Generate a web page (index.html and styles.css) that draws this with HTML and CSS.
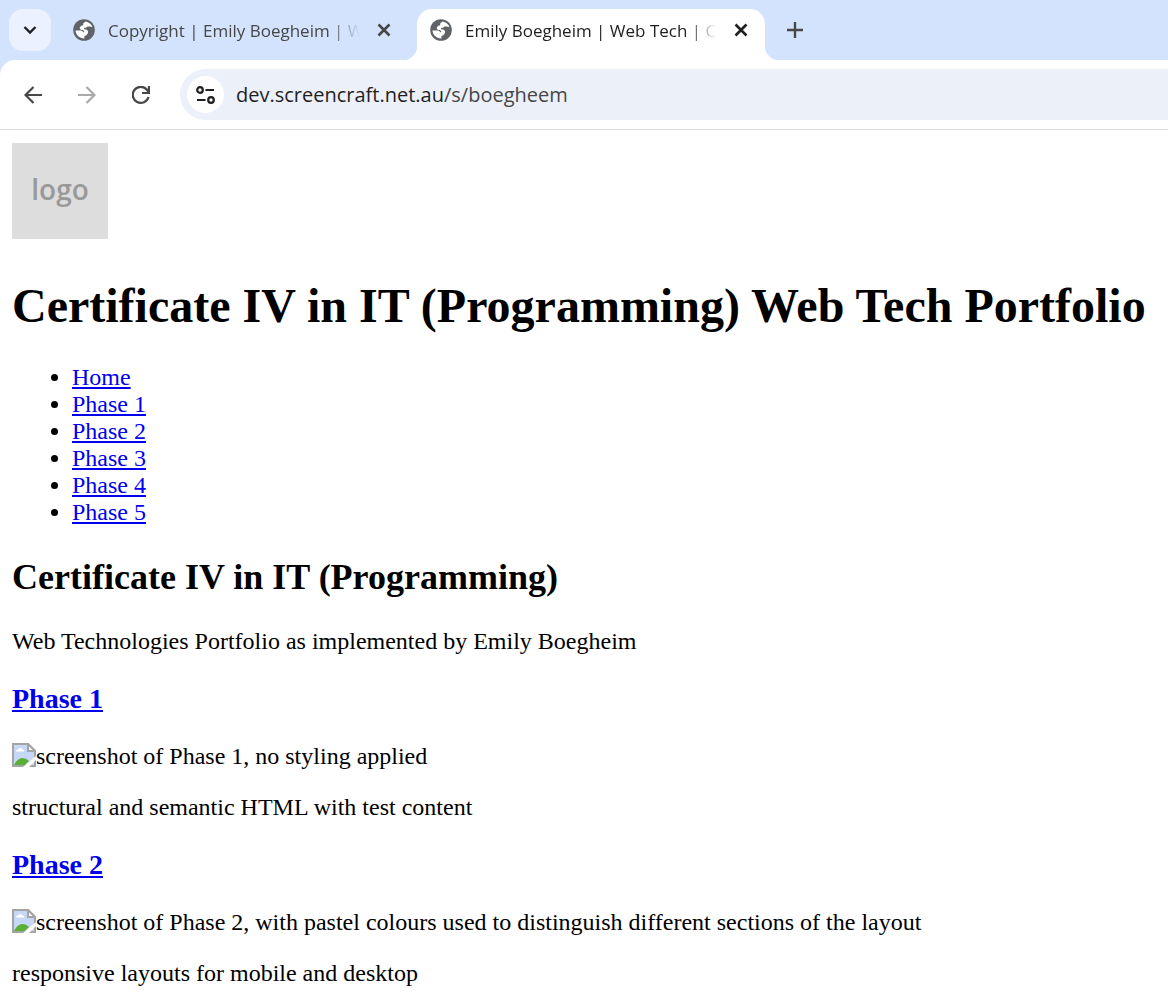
FILE: index.html
```html
<!DOCTYPE html>
<html lang="en">
<head>
<meta charset="utf-8">
<title>Emily Boegheim | Web Tech | Certificate IV in IT</title>
<link rel="stylesheet" href="styles.css">
</head>
<body>
<svg class="defs" aria-hidden="true">
  <defs>
    <symbol id="globe" viewBox="0 0 22 22">
      <circle cx="11" cy="11" r="10.8" fill="#5f6368"/>
      <path d="M12.500 2.500C16 3 18.600 5.200 19.400 8.200L17 7.600H14.500L13 8.800H11.200V10.400H13.400L15 12V14L13.400 16.200L11.400 17V19.500C6.500 19.600 2.700 16 2.500 11.600H7.600C9.400 11.600 9.600 13 10.600 13.400L11.400 12.600L9.800 11H8L6.800 9.600V8.200L8.600 6.600H10.200V4.600Z" fill="#fff"/>
    </symbol>
    <symbol id="close" viewBox="0 0 14 14"><path d="M1.500 1.500l11 11M12.500 1.500l-11 11" stroke="currentColor" stroke-width="2.600"/></symbol>
    <symbol id="broken" viewBox="0 0 24 24">
      <path d="M1 1h15l7 7v15H1z" fill="#c6d7f7" stroke="#a4a4a4" stroke-width="2"/>
      <path d="M4 8.500c0-2 2-2 2.300-2 .5-2 3.500-2 4 0 2 0 2 2 2 2z" fill="#fff"/>
      <path d="M2 22c2-4 5-7 8-7s5 1 7 3l-4 4z" fill="#5ab035"/>
      <path d="M16 1v7h7z" fill="#fff" stroke="#a4a4a4" stroke-width="2"/>
      <path d="M24 13v4l-7 7h-6z" fill="#fff"/>
    </symbol>
  </defs>
</svg>
<header class="browser">
  <div class="tab-strip">
    <button class="tab-search" aria-label="Search tabs"><svg width="14" height="10" viewBox="0 0 14 10"><path d="M1.500 2l5.500 5.500L12.500 2" fill="none" stroke="#1f1f1f" stroke-width="2.400"/></svg></button>
    <div class="tab">
      <svg class="favicon"><use href="#globe"/></svg>
      <span class="tab-title">Copyright | Emily Boegheim | W</span>
      <button class="icon-button" aria-label="Close tab"><svg width="14" height="14"><use href="#close"/></svg></button>
    </div>
    <div class="tab tab-active">
      <svg class="favicon"><use href="#globe"/></svg>
      <span class="tab-title">Emily Boegheim | Web Tech | Ce</span>
      <button class="icon-button" aria-label="Close tab"><svg width="14" height="14"><use href="#close"/></svg></button>
    </div>
    <button class="icon-button new-tab" aria-label="New tab"><svg width="16" height="16" viewBox="0 0 16 16"><path d="M8 0v16M0 8h16" stroke="#474747" stroke-width="2.400"/></svg></button>
  </div>
  <div class="toolbar-back">
    <div class="toolbar">
      <button class="nav-button" aria-label="Back"><svg width="18" height="18" viewBox="0 0 18 18"><path d="M18 9H2M9.500 1L1.500 9l8 8" fill="none" stroke="#474747" stroke-width="2.200"/></svg></button>
      <button class="nav-button" aria-label="Forward" disabled><svg width="18" height="18" viewBox="0 0 18 18"><path d="M0 9h16M8.500 1l8 8-8 8" fill="none" stroke="#a9a9a9" stroke-width="2.200"/></svg></button>
      <button class="nav-button" aria-label="Reload"><svg width="18" height="18" viewBox="0 0 18 18"><path d="M16.500 11A8 8 0 1 1 15 3.800l1.500 2.200M17 0v7h-7" fill="none" stroke="#474747" stroke-width="2.200"/></svg></button>
      <div class="address">
        <button class="site-info" aria-label="View site information"><svg width="20" height="18" viewBox="0 0 20 18"><g fill="none" stroke="#1f1f1f" stroke-width="2.200"><circle cx="4" cy="4" r="2.800"/><circle cx="15" cy="14" r="2.800"/><path d="M9.500 4H18M1 14h8.500"/></g></svg></button>
        <a class="url" href="#">dev.screencraft.net.au<span class="url-path">/s/boegheem</span></a>
      </div>
    </div>
  </div>
</header>
<main class="page">
  <div class="logo">logo</div>
  <h1>Certificate IV in IT (Programming) Web Tech Portfolio</h1>
  <nav>
    <ul>
      <li><a href="#">Home</a></li>
      <li><a href="#">Phase 1</a></li>
      <li><a href="#">Phase 2</a></li>
      <li><a href="#">Phase 3</a></li>
      <li><a href="#">Phase 4</a></li>
      <li><a href="#">Phase 5</a></li>
    </ul>
  </nav>
  <h2>Certificate IV in IT (Programming)</h2>
  <p>Web Technologies Portfolio as implemented by Emily Boegheim</p>
  <h3><a href="#">Phase 1</a></h3>
  <p class="missing"><svg class="broken"><use href="#broken"/></svg>screenshot of Phase 1, no styling applied</p>
  <p>structural and semantic HTML with test content</p>
  <h3><a href="#">Phase 2</a></h3>
  <p class="missing"><svg class="broken"><use href="#broken"/></svg>screenshot of Phase 2, with pastel colours used to distinguish different sections of the layout</p>
  <p>responsive layouts for mobile and desktop</p>
</main>
</body>
</html>
```
FILE: styles.css
```css
* { box-sizing: border-box; }

body {
  margin: 0;
  background: #fff;
  color: #000;
  font: 24px/27px "Liberation Serif", "Times New Roman", serif;
}

.defs { position: absolute; width: 0; height: 0; }

button {
  display: flex;
  flex: none;
  align-items: center;
  justify-content: center;
  padding: 0;
  border: 0;
  background: none;
  color: inherit;
}

.browser {
  border-bottom: 1px solid #dedede;
  font-family: "Open Sans", "Noto Sans", sans-serif;
}

.tab-strip {
  display: flex;
  gap: 9px;
  padding: 9px 9px 0;
  background: #d3e3fd;
}

.tab-search {
  width: 42px;
  height: 42px;
  border-radius: 14px;
  background: #ebf1fe;
}

.tab {
  position: relative;
  display: flex;
  flex: 0 1 348px;
  align-items: center;
  min-width: 0;
  height: 51px;
  padding: 0 12px 9px 13px;
  color: #474747;
}

.tab-active {
  border-radius: 15px 15px 0 0;
  background: #fff;
  color: #1f1f1f;
}

.tab-active::before,
.tab-active::after {
  content: "";
  position: absolute;
  bottom: 0;
  width: 15px;
  height: 15px;
}

.tab-active::before {
  right: 100%;
  background: radial-gradient(circle at 0 0, #d3e3fd 15px, #fff 16px);
}

.tab-active::after {
  left: 100%;
  background: radial-gradient(circle at 100% 0, #d3e3fd 15px, #fff 16px);
}

.favicon { flex: none; width: 22px; height: 22px; margin-right: 13px; }

.tab-title {
  flex: 1;
  min-width: 0;
  padding-top: 2px;
  overflow: hidden;
  font-size: 17px;
  line-height: 26px;
  white-space: nowrap;
  -webkit-mask-image: linear-gradient(to left, transparent, #000 32px);
  mask-image: linear-gradient(to left, transparent, #000 32px);
}

.icon-button { width: 24px; height: 24px; margin-left: 12px; }

.new-tab { height: 42px; margin-left: 9px; }

.toolbar-back { background: #d3e3fd; }

.toolbar {
  display: flex;
  align-items: center;
  padding: 9px 0 9px 6px;
  border-radius: 15px 0 0 0;
  background: #fff;
}

.nav-button { width: 54px; height: 42px; }

.address {
  display: flex;
  flex: 1;
  align-items: center;
  gap: 12px;
  height: 51px;
  margin-left: 12px;
  padding-left: 7px;
  border-radius: 26px 0 0 26px;
  background: #ecf0f9;
}

.site-info {
  width: 37px;
  height: 37px;
  border-radius: 50%;
  background: #fff;
}

.url {
  color: #1f1f1f;
  font-size: 20px;
  text-decoration: none;
}

.url-path { color: #474747; }

.page { padding: 13px 12px 0; }

.logo {
  display: flex;
  align-items: center;
  justify-content: center;
  width: 96px;
  height: 96px;
  padding-bottom: 4px;
  background: #ddd;
  color: #999;
  font: 600 28px/36px "Open Sans", "Noto Sans", sans-serif;
}

h1 { margin: 39px 0 31px; font-size: 48px; line-height: 55px; }
h2 { margin: 30px 0; font-size: 36px; line-height: 42px; }
h3 { margin: 28px 0; font-size: 28px; line-height: 32px; }
ul { margin: 24px 0; padding-left: 60px; }
p { margin: 24px 0; }
p:last-child { margin-bottom: 0; }
a { color: #0000ee; }

.missing { display: flex; }
.broken { flex: none; width: 24px; height: 24px; }
```
